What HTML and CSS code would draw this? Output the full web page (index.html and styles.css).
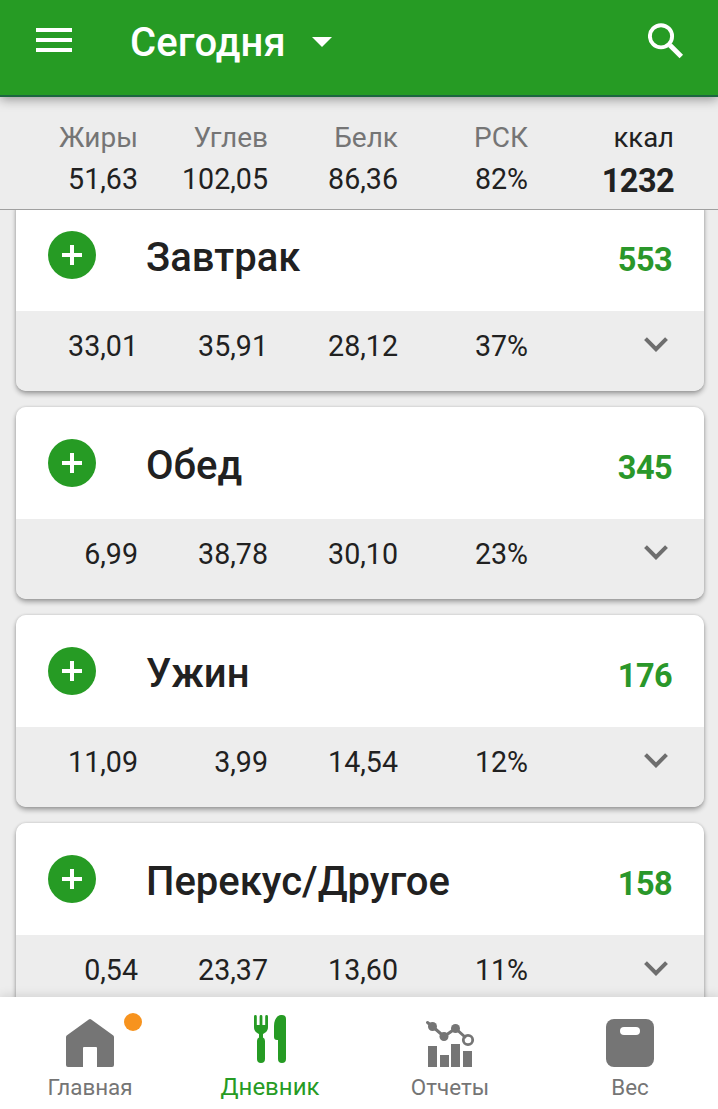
FILE: index.html
```html
<!DOCTYPE html>
<html lang="ru">
<head>
    <meta charset="UTF-8">
    <meta name="viewport" content="width=device-width, initial-scale=1.0">
    <title>Дневник питания</title>
    <link rel="stylesheet" href="styles.css">
</head>
<body>
    <header class="app-bar">
        <button class="icon-btn" aria-label="Меню">
            <svg width="36" height="24" viewBox="0 0 36 24"><path d="M0 0h36v4H0zM0 10h36v4H0zM0 20h36v4H0z" fill="#fff"/></svg>
        </button>
        <h1>Сегодня</h1>
        <svg class="caret" width="20" height="10" viewBox="0 0 20 10"><path d="M0 0h20L10 10z" fill="#fff"/></svg>
        <button class="icon-btn search-btn" aria-label="Поиск">
            <svg width="36" height="36" viewBox="0 0 36 36" fill="none" stroke="#fff"><circle cx="13" cy="13.3" r="11.1" stroke-width="3.9"/><path d="M22 22.3L33.3 33.6" stroke-width="4.9"/></svg>
        </button>
    </header>

    <section class="summary">
        <div class="stat"><span class="label">Жиры</span><span class="value">51,63</span></div>
        <div class="stat"><span class="label">Углев</span><span class="value">102,05</span></div>
        <div class="stat"><span class="label">Белк</span><span class="value">86,36</span></div>
        <div class="stat"><span class="label">РСК</span><span class="value">82%</span></div>
        <div class="stat total"><span class="label">ккал</span><strong>1232</strong></div>
    </section>

    <main class="meals">
        <article class="meal">
            <div class="meal-head">
                <button class="add-btn" aria-label="Добавить"><svg width="20" height="20" viewBox="0 0 20 20"><path d="M10 0v20M0 10h20" stroke="#fff" stroke-width="4"/></svg></button>
                <h2>Завтрак</h2>
                <span class="calories">553</span>
            </div>
            <div class="meal-values">
                <span>33,01</span><span>35,91</span><span>28,12</span><span>37%</span>
                <svg class="chevron" width="24" height="15" viewBox="0 0 24 15"><path d="M1.5 1.7L12 12.2 22.5 1.7"/></svg>
            </div>
        </article>

        <article class="meal">
            <div class="meal-head">
                <button class="add-btn" aria-label="Добавить"><svg width="20" height="20" viewBox="0 0 20 20"><path d="M10 0v20M0 10h20" stroke="#fff" stroke-width="4"/></svg></button>
                <h2>Обед</h2>
                <span class="calories">345</span>
            </div>
            <div class="meal-values">
                <span>6,99</span><span>38,78</span><span>30,10</span><span>23%</span>
                <svg class="chevron" width="24" height="15" viewBox="0 0 24 15"><path d="M1.5 1.7L12 12.2 22.5 1.7"/></svg>
            </div>
        </article>

        <article class="meal">
            <div class="meal-head">
                <button class="add-btn" aria-label="Добавить"><svg width="20" height="20" viewBox="0 0 20 20"><path d="M10 0v20M0 10h20" stroke="#fff" stroke-width="4"/></svg></button>
                <h2>Ужин</h2>
                <span class="calories">176</span>
            </div>
            <div class="meal-values">
                <span>11,09</span><span>3,99</span><span>14,54</span><span>12%</span>
                <svg class="chevron" width="24" height="15" viewBox="0 0 24 15"><path d="M1.5 1.7L12 12.2 22.5 1.7"/></svg>
            </div>
        </article>

        <article class="meal">
            <div class="meal-head">
                <button class="add-btn" aria-label="Добавить"><svg width="20" height="20" viewBox="0 0 20 20"><path d="M10 0v20M0 10h20" stroke="#fff" stroke-width="4"/></svg></button>
                <h2>Перекус/Другое</h2>
                <span class="calories">158</span>
            </div>
            <div class="meal-values">
                <span>0,54</span><span>23,37</span><span>13,60</span><span>11%</span>
                <svg class="chevron" width="24" height="15" viewBox="0 0 24 15"><path d="M1.5 1.7L12 12.2 22.5 1.7"/></svg>
            </div>
        </article>
    </main>

    <nav class="tab-bar">
        <a class="tab">
            <span class="tab-icon">
                <svg width="48" height="52" viewBox="0 0 48 52"><path d="M22.8 4.4q1.2-.8 2.4 0L47 20.2q1 .7 1 2V50q0 2-2 2H31V33q0-1-1-1H18q-1 0-1 1v19H2q-2 0-2-2V22.2q0-1.3 1-2z" fill="currentColor"/></svg>
                <i class="dot"></i>
            </span>
            Главная
        </a>
        <a class="tab active">
            <span class="tab-icon">
                <svg width="48" height="52" viewBox="0 0 48 52" fill="currentColor">
                    <path d="M8 1.4a1.4 1.4 0 0 1 2.8 0V10h2.8V1.4a1.4 1.4 0 0 1 2.8 0V10h2.8V1.4a1.4 1.4 0 0 1 2.8 0V12c0 4-2.2 5.5-5 7v3.6q2 1 2 3.4v18a4 4 0 0 1-8 0V26q0-2.4 2-3.4V19c-2.8-1.5-5-3-5-7z"/>
                    <path d="M36 0h-1c-4.5.5-7 5-7 11v11q0 3 3 3h1v19a4 4 0 0 0 8 0V4a4 4 0 0 0-4-4z"/>
                </svg>
            </span>
            Дневник
        </a>
        <a class="tab">
            <span class="tab-icon">
                <svg width="50" height="52" viewBox="0 0 50 52" fill="currentColor">
                    <path d="M3 31h9v21H3zM15 40h9v12h-9zM26 29h9v23h-9zM38 36h9v16h-9z"/>
                    <path d="M2.5 7.5L7.5 11.5 19 21.5 30.5 13.5 40 22" fill="none" stroke="currentColor" stroke-width="3" stroke-linecap="round"/>
                    <circle cx="7.5" cy="11.5" r="4.5"/><circle cx="19" cy="21.5" r="4.5"/><circle cx="30.5" cy="13.5" r="4.5"/>
                    <circle cx="43" cy="25" r="4.7" fill="none" stroke="currentColor" stroke-width="2.8"/>
                </svg>
            </span>
            Отчеты
        </a>
        <a class="tab">
            <span class="tab-icon">
                <svg width="48" height="52" viewBox="0 0 48 52"><rect y="4" width="48" height="48" rx="8" fill="currentColor"/><rect x="14" y="12" width="20" height="8" rx="4" fill="#fff"/></svg>
            </span>
            Вес
        </a>
    </nav>
</body>
</html>
```
FILE: styles.css
```css
/* General Reset */
* {
    margin: 0;
    padding: 0;
    box-sizing: border-box;
}

body {
    display: flex;
    flex-direction: column;
    height: 100vh;
    overflow: hidden;
    font-family: Roboto, sans-serif;
    font-size: 28px;
    color: #212121;
    background-color: #ededed;
}

button {
    display: flex;
    border: none;
    background: none;
    cursor: pointer;
}

svg {
    display: block;
}

/* Header */
.app-bar {
    display: flex;
    align-items: center;
    flex: none;
    height: 97px;
    padding: 0 34px 15px 36px;
    background-color: #269b24;
    border-bottom: 2px solid #1c6640;
    box-shadow: 0 2px 11px rgba(0, 0, 0, 0.4);
    z-index: 2;
}

.app-bar h1 {
    margin-left: 58px;
    padding-top: 5px;
    font-size: 40px;
    font-weight: 500;
    line-height: 48px;
    letter-spacing: 0.15px;
    color: #fff;
}

.caret {
    margin: 3px 0 0 26px;
}

.search-btn {
    margin: 2px 0 0 auto;
}

/* Day totals */
.summary {
    display: flex;
    flex: none;
    height: 113px;
    padding: 23px 44px 0 8px;
    background-color: #ededed;
    border-bottom: 1px solid #a0a0a0;
    z-index: 1;
}

.stat {
    display: flex;
    flex-direction: column;
    width: 130px;
    text-align: right;
    line-height: 36px;
    gap: 5px;
}

.stat .label {
    color: #757575;
}

.stat .value {
    font-size: 28.6px;
}

.total {
    flex: 1;
}

.total .label {
    font-size: 27.5px;
    color: #212121;
}

.total strong {
    padding-top: 2px;
    font-size: 32.5px;
    font-weight: 700;
    letter-spacing: -0.6px;
}

/* Meals */
.meals {
    display: flex;
    flex-direction: column;
    flex: 1;
    gap: 16px;
    min-height: 0;
    margin-top: -11px;
    padding: 0 14px 0 16px;
}

.meal {
    flex: none;
    border-radius: 10px;
    box-shadow: 0 3px 5px rgba(0, 0, 0, 0.32), 0 0 3px rgba(0, 0, 0, 0.15);
    overflow: hidden;
}

.meal-head {
    display: flex;
    align-items: center;
    height: 112px;
    padding: 0 32px;
    background-color: #fff;
}

.add-btn {
    align-items: center;
    justify-content: center;
    width: 48px;
    height: 48px;
    border-radius: 50%;
    background-color: #269b24;
}

.meal-head h2 {
    margin-left: 50px;
    font-size: 40px;
    font-weight: 500;
    line-height: 48px;
    padding-top: 5px;
}

.calories {
    margin-left: auto;
    padding-top: 9px;
    font-size: 32.5px;
    font-weight: 700;
    letter-spacing: -0.6px;
    color: #2a972a;
}

.meal-values {
    display: flex;
    height: 80px;
    padding: 17px 36px 0 0;
    background-color: #ededed;
    font-size: 28.6px;
    line-height: 36px;
}

.meal-values span {
    width: 130px;
    text-align: right;
}

.meal-values span:first-child {
    width: 122px;
}

.chevron {
    margin: 9px 0 0 auto;
    fill: none;
    stroke: #6e6e6e;
    stroke-width: 4;
}

/* Bottom navigation */
.tab-bar {
    display: flex;
    flex: none;
    height: 112px;
    margin-right: -2px;
    padding-top: 18px;
    background-color: #fff;
    box-shadow: 0 -1px 10px rgba(0, 0, 0, 0.13);
    z-index: 1;
}

.tab {
    display: flex;
    flex: 1;
    flex-direction: column;
    align-items: center;
    gap: 5px;
    font-size: 22.4px;
    line-height: 30px;
    color: #757575;
}

.tab.active {
    font-size: 24px;
    color: #269b24;
}

.tab-icon {
    position: relative;
}

.dot {
    position: absolute;
    top: -2px;
    right: -28px;
    width: 18px;
    height: 18px;
    border-radius: 50%;
    background-color: #f7931e;
}
```
